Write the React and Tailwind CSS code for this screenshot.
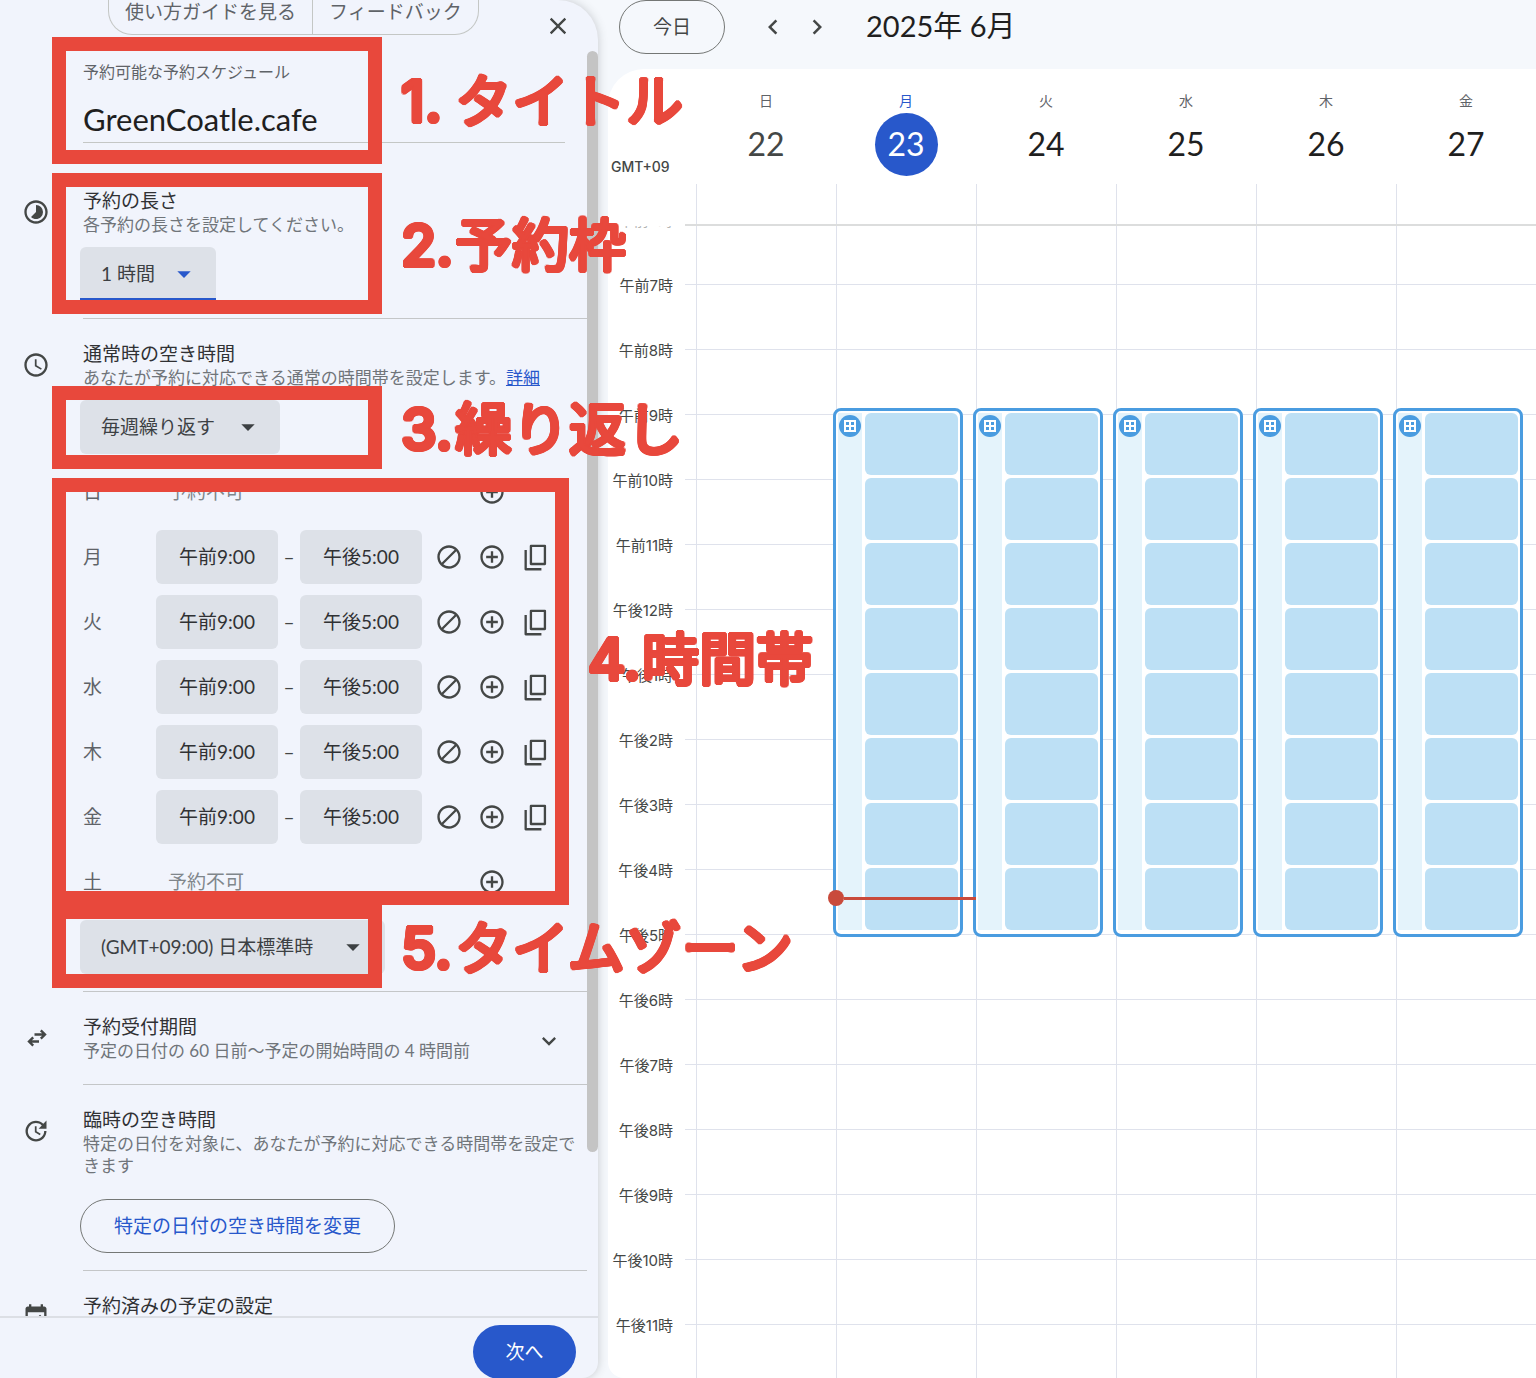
import {
  MdAddCircleOutline,
  MdArrowDropDown,
  MdBlock,
  MdChevronLeft,
  MdChevronRight,
  MdClose,
  MdEventAvailable,
  MdExpandMore,
  MdSchedule,
  MdTimelapse,
  MdUpdate,
} from "react-icons/md";

const WEEK = ["日", "月", "火", "水", "木", "金", "土"];

const DAYS = [
  { name: "日", date: 22, past: true },
  { name: "月", date: 23, today: true, open: true },
  { name: "火", date: 24, open: true },
  { name: "水", date: 25, open: true },
  { name: "木", date: 26, open: true },
  { name: "金", date: 27, open: true },
];

const HOURS = [
  "午前6時", "午前7時", "午前8時", "午前9時", "午前10時", "午前11時",
  "午後12時", "午後1時", "午後2時", "午後3時", "午後4時", "午後5時",
  "午後6時", "午後7時", "午後8時", "午後9時", "午後10時", "午後11時",
];

const SLOTS = [9, 10, 11, 12, 13, 14, 15, 16];

function CopyIcon() {
  return (
    <svg viewBox="0 0 24 24" className="size-7" fill="none" stroke="currentColor" strokeWidth="2" strokeLinejoin="round" aria-hidden="true">
      <path d="M8.5 2.5h12v15.5h-12z" />
      <path d="M4 6v16.5h13.5" />
    </svg>
  );
}

function SwapIcon() {
  return (
    <svg viewBox="0 0 24 24" className="mx-[3px] my-[2px] size-6" fill="none" stroke="currentColor" strokeWidth="2.4" aria-hidden="true">
      <path d="M9.5 8.5h10.5M15.8 4.3l4.2 4.2-4.2 4.2" />
      <path d="M14 15.5H3.5M8.2 11.3l-4.2 4.2 4.2 4.2" />
    </svg>
  );
}

function GridIcon() {
  return (
    <svg viewBox="0 0 12 12" className="size-3" aria-hidden="true">
      <path
        fill="#fff"
        fillRule="evenodd"
        d="M0 0h12v12H0zM2 2v3h3V2zM7 2v3h3V2zM2 7v3h3V7zM7 7v3h3V7z"
      />
    </svg>
  );
}

function Dropdown({ label, value, width, active }) {
  return (
    <div className={`relative h-[54px] ${width}`}>
      <select
        aria-label={label}
        className={`h-full w-full appearance-none rounded-md bg-[#dde1e8] pl-[21px] text-[19px] text-[#3c4043] outline-none ${
          active ? "rounded-b-none border-b-3 border-[#2858cb] pt-[3px]" : ""
        }`}
      >
        <option>{value}</option>
      </select>
      <MdArrowDropDown
        className={`pointer-events-none absolute top-[11px] right-4 size-8 ${active ? "text-[#2858cb]" : "text-[#3c4043]"}`}
      />
    </div>
  );
}

function Section({ icon, title, text, children, className = "" }) {
  return (
    <section className="flex text-[#444746]">
      <div className="w-[83px] shrink-0 pl-[22px]">
        <div className={className}>
          <div className="pt-[11px]">{icon}</div>
        </div>
      </div>
      <div className={`min-w-0 flex-1 border-b border-[#c4c6c8] ${className}`}>
        <h2 className="text-[19px] leading-[27px] text-[#303134]">{title}</h2>
        {text && <p className="text-[17px] leading-[22px] text-[#70757a]">{text}</p>}
        {children}
      </div>
    </section>
  );
}

function DayRow({ day }) {
  const closed = day === "日" || day === "土";
  return (
    <div className="flex h-[54px] items-center pl-[3px]">
      <span className="w-[73px] text-[19px] text-[#5f6368]">{day}</span>
      {closed ? (
        <span className="w-[310px] pl-3 text-[19px] text-[#80868b]">予約不可</span>
      ) : (
        <>
          <input
            aria-label={`${day} 開始`}
            defaultValue="午前9:00"
            className="h-full w-[122px] rounded-md bg-[#dde1e8] pb-1 text-center text-[19px] text-[#303134]"
          />
          <span className="w-[22px] text-center text-[19px]">–</span>
          <input
            aria-label={`${day} 終了`}
            defaultValue="午後5:00"
            className="h-full w-[122px] rounded-md bg-[#dde1e8] pb-1 text-center text-[19px] text-[#303134]"
          />
          <button aria-label={`${day} 予約不可にする`} className="ml-[13px] w-[43px]">
            <MdBlock className="size-7" />
          </button>
        </>
      )}
      <button aria-label={`${day} 時間帯を追加`} className={closed ? "ml-3 w-[43px]" : "w-[43px]"}>
        <MdAddCircleOutline className="size-7" />
      </button>
      {!closed && (
        <button aria-label={`${day} すべてにコピー`}>
          <CopyIcon />
        </button>
      )}
    </div>
  );
}

function BookingPanel() {
  return (
    <aside className="relative z-10 flex h-full w-[598px] shrink-0 flex-col overflow-hidden rounded-tr-[40px] rounded-br-2xl bg-[#f1f4fc] shadow-[0_0_10px_rgba(60,64,67,0.25)]">
      <header className="flex h-[51px] shrink-0 items-start pr-[26px] pl-[108px]">
        <div className="flex h-[35px] rounded-b-[24px] border border-t-0 border-[#c4c7c5] text-[19px] text-[#5f6368]">
          <button className="border-r border-[#c4c7c5] px-4 pb-[22px] leading-6">使い方ガイドを見る</button>
          <button className="px-4 pb-[22px] leading-6">フィードバック</button>
        </div>
        <button aria-label="閉じる" className="mt-3 ml-auto text-[#444746]">
          <MdClose className="size-7" />
        </button>
      </header>

      <div className="flex min-h-0 flex-1">
        <div className="min-w-0 flex-1 overflow-hidden">
          <div className="pt-[10px] pr-[22px] pl-[83px]">
            <label htmlFor="title" className="block text-base leading-[22px] text-[#5f6368]">
              予約可能な予約スケジュール
            </label>
            <input
              id="title"
              defaultValue="GreenCoatle.cafe"
              className="mt-[14px] h-[46px] w-full border-b border-[#c4c7c5] bg-transparent text-[31px] text-[#1f1f1f] outline-none"
            />
          </div>

          <Section
            className="pt-[44px] pb-[17px]"
            icon={<MdTimelapse className="size-7" />}
            title="予約の長さ"
            text="各予約の長さを設定してください。"
          >
            <div className="mt-[11px] -ml-[3px]">
              <Dropdown label="予約の長さ" value="1 時間" width="w-[136px]" active />
            </div>
          </Section>

          <Section
            className="pt-[21px] pb-[17px]"
            icon={<MdSchedule className="size-7" />}
            title="通常時の空き時間"
            text={
              <span className="whitespace-nowrap">
                あなたが予約に対応できる通常の時間帯を設定します。
                <a href="#details" className="text-[#2858cb] underline">詳細</a>
              </span>
            }
          >
            <div className="mt-[11px] -ml-[3px] flex flex-col gap-[11px]">
              <Dropdown label="繰り返し" value="毎週繰り返す" width="w-[200px]" />
              {WEEK.map((day) => (
                <DayRow key={day} day={day} />
              ))}
              <Dropdown label="タイムゾーン" value="(GMT+09:00) 日本標準時" width="w-[305px]" />
            </div>
          </Section>

          <Section
            className="relative pt-[21px] pb-[22px]"
            icon={<SwapIcon />}
            title="予約受付期間"
            text="予定の日付の 60 日前〜予定の開始時間の 4 時間前"
          >
            <button aria-label="予約受付期間を開く" className="absolute top-[35px] right-6">
              <MdExpandMore className="size-7" />
            </button>
          </Section>

          <Section
            className="pt-[21px] pb-[17px]"
            icon={<MdUpdate className="size-7" />}
            title="臨時の空き時間"
            text="特定の日付を対象に、あなたが予約に対応できる時間帯を設定できます"
          >
            <button className="mt-[22px] -ml-[3px] block h-[54px] rounded-full border border-[#747775] px-[33px] text-[19px] text-[#2858cb]">
              特定の日付の空き時間を変更
            </button>
          </Section>

          <Section
            className="pt-[21px]"
            icon={<MdEventAvailable className="size-7" />}
            title="予約済みの予定の設定"
          />
        </div>
        <div className="w-[11px] shrink-0">
          <div className="h-[87%] rounded-full bg-[#c4c4c4]" />
        </div>
      </div>

      <footer className="flex h-[62px] shrink-0 items-start justify-end border-t-2 border-[#dcdfe5] pt-[7px] pr-[22px]">
        <button className="h-[54px] w-[103px] shrink-0 rounded-full bg-[#2858cb] text-[19px] text-white">次へ</button>
      </footer>
    </aside>
  );
}

function OpenBlock() {
  return (
    <div className="absolute top-[182px] right-[13px] -left-1 flex gap-[3px] rounded-lg border-3 border-[#4a9ce0] bg-white px-[2px] pt-[2px] pb-1">
      <div className="w-6 shrink-0 bg-[#e4f3fb] pt-[2px]">
        <div className="ml-px flex size-[22px] items-center justify-center rounded-full bg-[#4a9ce0]">
          <GridIcon />
        </div>
      </div>
      <div className="flex flex-1 flex-col gap-[3px]">
        {SLOTS.map((slot) => (
          <div key={slot} className="h-[62px] rounded-md bg-[#bde0f5]" />
        ))}
      </div>
    </div>
  );
}

function Calendar() {
  return (
    <main className="flex min-w-0 flex-1 flex-col pl-[10px]">
      <div className="flex h-[69px] shrink-0 items-start pl-[11px]">
        <button className="h-[54px] w-[106px] rounded-full border border-[#747775] text-[19px] text-[#444746]">今日</button>
        <div className="flex h-[54px] items-center pl-[33px] text-[#444746]">
          <button aria-label="前の週" className="w-11">
            <MdChevronLeft className="size-[30px]" />
          </button>
          <button aria-label="次の週" className="w-11">
            <MdChevronRight className="size-[30px]" />
          </button>
        </div>
        <h1 className="pl-5 text-[29px] leading-[52px] text-[#1f1f1f]">2025年 6月</h1>
      </div>

      <div className="flex min-h-0 flex-1 flex-col overflow-hidden rounded-tl-[36px] rounded-bl-2xl bg-white">
        <div className="flex shrink-0">
          <div className="flex h-[115px] w-[88px] items-end pb-2 pl-[3px] font-['Inter'] text-sm leading-[18px] font-medium text-[#444746]">
            GMT+09
          </div>
          <div className="grid flex-1 grid-cols-6">
            {DAYS.map((d) => (
              <div key={d.date} className="flex flex-col items-center pt-5">
                <span className={`text-sm leading-6 ${d.today ? "text-[#2858cb]" : "text-[#5f6368]"}`}>{d.name}</span>
                <span
                  className={`flex size-[63px] items-center justify-center rounded-full pb-[2px] text-[32px] ${
                    d.today ? "bg-[#2858cb] text-white" : d.past ? "text-[#444746]" : "text-[#1f1f1f]"
                  }`}
                >
                  {d.date}
                </span>
              </div>
            ))}
          </div>
        </div>

        <div className="ml-[77px] shrink-0 border-b-2 border-[#dcdddd] pl-[11px]">
          <div className="grid h-10 grid-cols-6">
            {DAYS.map((d) => (
              <div key={d.date} className="border-l border-[#dfe2ec]" />
            ))}
          </div>
        </div>

        <div className="relative min-h-0 flex-1 overflow-hidden">
          <div className="-mt-[7px]">
            {HOURS.map((hour, i) => (
              <div key={hour} className="flex h-[65px]">
                <div
                  className={`-mt-2 w-[77px] pr-3 text-right font-['Inter','Noto_Sans_CJK_JP',sans-serif] text-[15px] leading-5 whitespace-nowrap text-[#444746] ${
                    i === 0 ? "opacity-40" : ""
                  }`}
                >
                  {hour}
                </div>
                <div className="flex-1 border-t border-[#dfe2ec]" />
              </div>
            ))}
          </div>
          <div className="absolute inset-y-0 right-0 left-[88px] grid grid-cols-6">
            {DAYS.map((d) => (
              <div key={d.date} className="relative border-l border-[#dfe2ec]">
                {d.open && <OpenBlock />}
                {d.today && (
                  <div className="absolute top-[664px] right-0 -left-[9px] z-10 flex items-center">
                    <span className="size-4 rounded-full bg-[#c94a3b]" />
                    <span className="h-[3px] flex-1 bg-[#c94a3b]" />
                  </div>
                )}
              </div>
            ))}
          </div>
        </div>
      </div>
    </main>
  );
}

const CALLOUTS = [
  { number: "1.", text: "タイトル", frame: "top-[37px] h-[127px] w-[330px]", label: "top-[70px] left-[401px]" },
  { number: "2.", text: "予約枠", frame: "top-[173px] h-[141px] w-[330px]", label: "top-[214px] left-[401px]" },
  { number: "3.", text: "繰り返し", frame: "top-[386px] h-[83px] w-[330px]", label: "top-[398px] left-[401px]" },
  { number: "4.", text: "時間帯", frame: "top-[478px] h-[427px] w-[517px]", label: "top-[628px] left-[588px]" },
  { number: "5.", text: "タイムゾーン", frame: "top-[905px] h-[83px] w-[330px]", label: "top-[917px] left-[401px]" },
];

function Callouts() {
  return (
    <div className="pointer-events-none absolute inset-0 z-20">
      {CALLOUTS.map((c) => (
        <div key={c.text}>
          <div className={`absolute left-[52px] border-14 border-[#e8483c] ${c.frame}`} />
          <p
            className={`absolute flex font-['Inter','Noto_Sans_CJK_JP',sans-serif] text-[57px] leading-[64px] whitespace-nowrap text-[#e8483c] [text-shadow:2px_0_#e8483c,-2px_0_#e8483c,0_2px_#e8483c,0_-2px_#e8483c,2px_1px_#e8483c,-2px_1px_#e8483c,2px_-1px_#e8483c,-2px_-1px_#e8483c,1px_2px_#e8483c,-1px_2px_#e8483c,1px_-2px_#e8483c,-1px_-2px_#e8483c] ${c.label}`}
          >
            <span className="w-[54px] font-medium">{c.number}</span>
            <span>{c.text}</span>
          </p>
        </div>
      ))}
    </div>
  );
}

export default function App() {
  return (
    <div lang="ja" className="relative flex h-screen overflow-hidden bg-[#f5f8fc] font-['Lato','Noto_Sans_CJK_JP',sans-serif]">
      <BookingPanel />
      <Calendar />
      <Callouts />
    </div>
  );
}
